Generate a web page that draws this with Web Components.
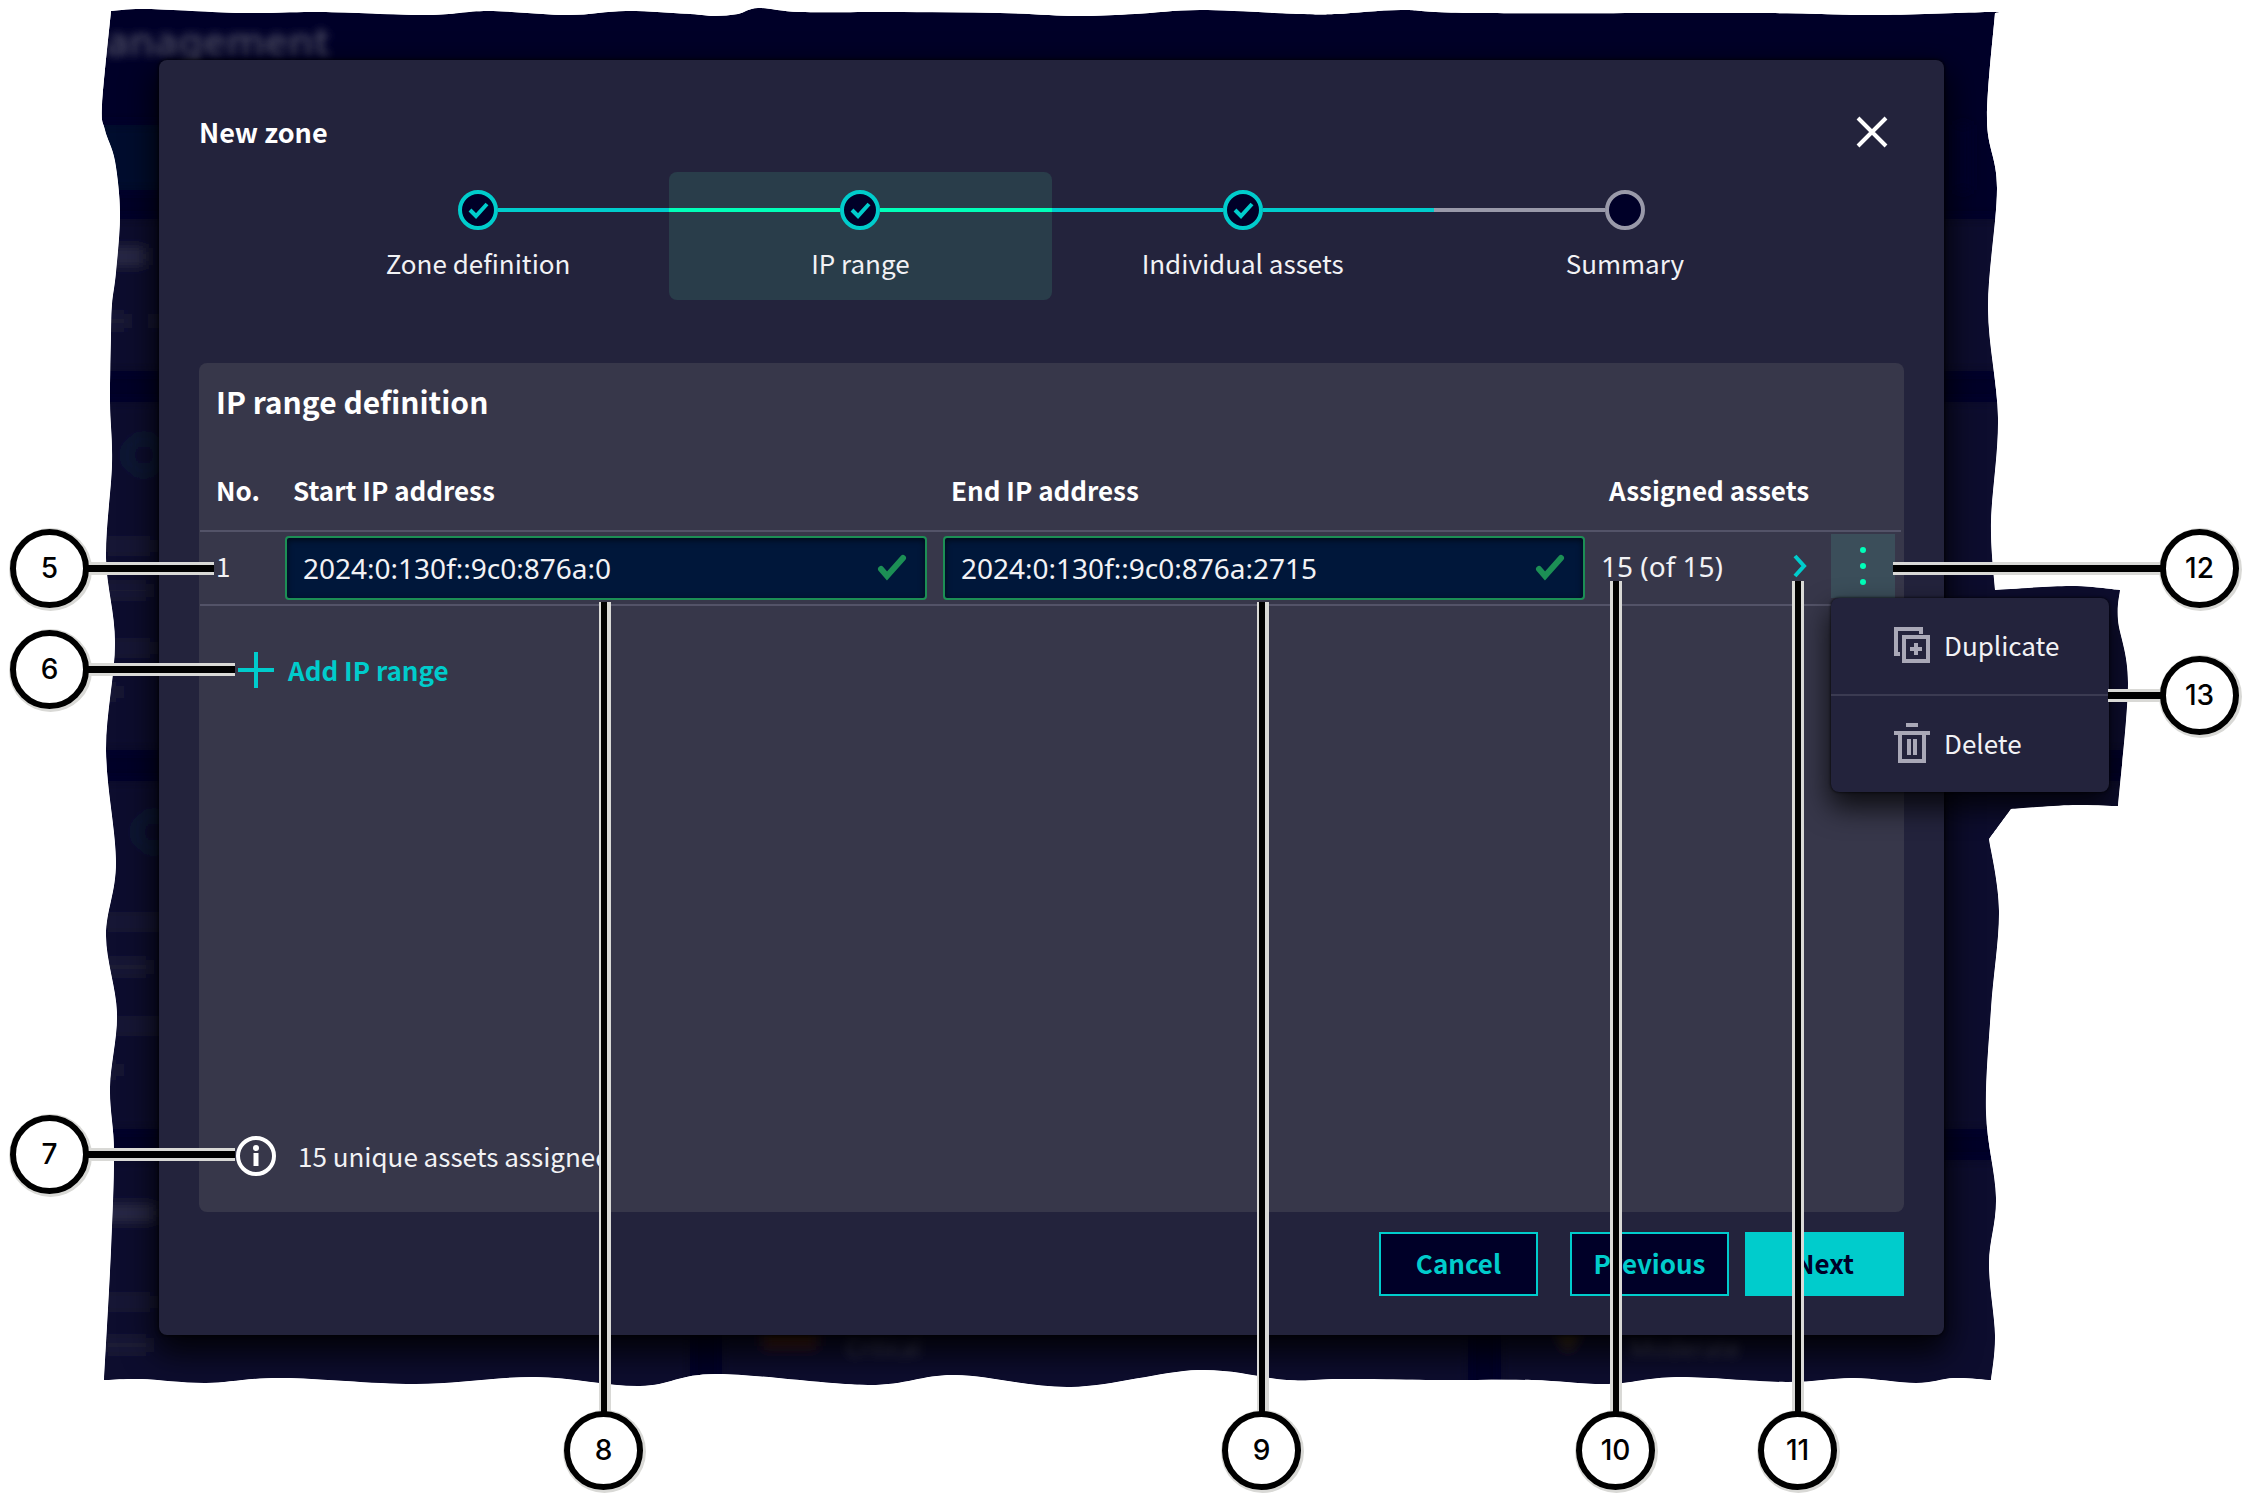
<!DOCTYPE html>
<html lang="en">
<head>
<meta charset="utf-8">
<title>New zone – IP range</title>
<style>
  html { background: #fff; }
  body {
    margin: 0;
    font: 26px/40px "Noto Sans CJK SC", "Noto Sans", sans-serif;
    color: #f2f2f5;
    --cyan: #00cccc;
    --mint: #00ffb9;
    --navy: #000028;
    --dialog: #23233c;
    --panel: #37374a;
    --line: #535368;
    --muted: #9999a9;
    --ok: #1c8f55;
    --digits: "Noto Sans", sans-serif;
  }
</style>
</head>
<body>
<zone-figure>
  <zone-dialog heading="New zone">
    <zone-stepper slot="steps">
      <zone-step state="done" edge="first">Zone definition</zone-step>
      <zone-step state="done" current>IP range</zone-step>
      <zone-step state="done">Individual assets</zone-step>
      <zone-step state="open" edge="last">Summary</zone-step>
    </zone-stepper>
    <ip-range-panel></ip-range-panel>
    <zone-button slot="actions" apart>Cancel</zone-button>
    <zone-button slot="actions">Previous</zone-button>
    <zone-button slot="actions" primary>Next</zone-button>
  </zone-dialog>

  <call-out slot="pins" side="left" style="left:10px;top:529px;--reach:125px">5</call-out>
  <call-out slot="pins" side="left" style="left:10px;top:630px;--reach:146px">6</call-out>
  <call-out slot="pins" side="left" style="left:10px;top:1115px;--reach:146px">7</call-out>
  <call-out slot="pins" side="bottom" style="left:564px;top:1411px;--reach:809px">8</call-out>
  <call-out slot="pins" side="bottom" style="left:1222px;top:1411px;--reach:809px">9</call-out>
  <call-out slot="pins" side="bottom" even style="left:1576px;top:1411px;--reach:830px">10</call-out>
  <call-out slot="pins" side="bottom" even style="left:1758px;top:1411px;--reach:830px">11</call-out>
  <call-out slot="pins" side="right" style="left:2160px;top:529px;--reach:267px">12</call-out>
  <call-out slot="pins" side="right" style="left:2160px;top:656px;--reach:52px">13</call-out>
</zone-figure>

<script>
function define(name, html, setup) {
  const tpl = document.createElement('template');
  tpl.innerHTML = html;
  customElements.define(name, class extends HTMLElement {
    constructor() {
      super();
      this.attachShadow({ mode: 'open' }).append(tpl.content.cloneNode(true));
    }
    connectedCallback() { if (setup) setup(this, this.shadowRoot); }
  });
}

/* Smooth closed outline: each side is a run of points, corners between sides stay sharp. */
function smooth(sides) {
  let d = 'M' + sides[0][0];
  for (const p of sides) {
    for (let i = 0; i < p.length - 1; i++) {
      const a = p[i - 1] || p[i], b = p[i], c = p[i + 1], e = p[i + 2] || c;
      d += `C${b[0] + (c[0] - a[0]) / 6} ${b[1] + (c[1] - a[1]) / 6} ${c[0] - (e[0] - b[0]) / 6} ${c[1] - (e[1] - b[1]) / 6} ${c[0]} ${c[1]}`;
    }
  }
  return d + 'Z';
}
const torn = smooth([
  [[111,11],[147,9],[243,13],[320,12],[427,15],[488,11],[568,15],[626,11],[690,14],[714,16],[738,14],[758,8],[800,12],[890,12],[1000,13],[1078,16],[1135,14],[1200,10],[1300,14],[1337,14],[1401,10],[1474,13],[1760,13],[1878,15],[1989,12],[1995,13]],
  [[1995,13],[1987,120],[1997,188],[1988,308],[1998,418],[1991,522],[1995,590]],
  [[1995,590],[2070,586],[2120,590]],
  [[2120,590],[2118,620],[2128,683],[2118,806]],
  [[2118,806],[2073,805],[2011,809]],
  [[2011,809],[1989,839]],
  [[1989,839],[1999,911],[1991,1009],[1986,1112],[1996,1198],[1989,1263],[1995,1335],[1991,1380]],
  [[1991,1380],[1954,1378],[1916,1383],[1853,1378],[1786,1382],[1677,1377],[1608,1384],[1532,1380],[1438,1380],[1340,1379],[1287,1380],[1198,1370],[1071,1387],[955,1375],[868,1385],[716,1374],[640,1386],[535,1377],[416,1384],[282,1378],[206,1383],[141,1379],[104,1380]],
  [[104,1380],[111,1250],[114,1152],[110,1087],[117,1013],[106,936],[116,862],[106,750],[115,643],[106,558],[112,464],[110,402],[111,335],[112,304],[116,272],[120,214],[115,161],[105,130],[102,105],[111,11]]
]);

define('torn-backdrop', `
<style>
  :host { display: block; position: absolute; inset: 0; z-index: 0; }
  svg { display: block; width: 100%; height: 100%; }
</style>
<svg viewBox="0 0 2244 1497" preserveAspectRatio="none" aria-hidden="true">
  <defs>
    <clipPath id="edge"><path/></clipPath>
    <filter id="soft" x="-20%" y="-20%" width="140%" height="140%"><feGaussianBlur stdDeviation="6"/></filter>
    <filter id="text" x="-20%" y="-50%" width="140%" height="200%"><feGaussianBlur stdDeviation="4"/></filter>
  </defs>
  <g clip-path="url(#edge)">
    <rect width="2244" height="1497" fill="#000028"/>
    <g filter="url(#soft)">
      <rect x="60" y="125" width="110" height="65" fill="#000a2d"/>
      <rect x="1957" y="125" width="12" height="65" fill="#06062e"/>
      <rect x="40" y="219" width="2160" height="152" fill="#0c0c2d"/>
      <rect x="40" y="402" width="2160" height="348" fill="#0c0c2d"/>
      <rect x="40" y="781" width="2160" height="348" fill="#0c0c2d"/>
      <rect x="40" y="1160" width="650" height="300" fill="#0c0c2d"/>
      <rect x="722" y="1160" width="746" height="300" fill="#0c0c2d"/>
      <rect x="1501" y="1160" width="700" height="300" fill="#0c0c2d"/>
      <circle cx="144" cy="455" r="17" fill="none" stroke="#0a1b38" stroke-width="8"/>
      <circle cx="154" cy="832" r="17" fill="none" stroke="#0a1b38" stroke-width="8"/>
      <g fill="#1b1a38">
        <rect x="104" y="540" width="50" height="12"/><rect x="104" y="584" width="46" height="13"/>
        <rect x="104" y="642" width="50" height="12"/><rect x="104" y="686" width="16" height="12"/>
        <rect x="104" y="314" width="24" height="14"/><rect x="152" y="314" width="12" height="14"/>
        <rect x="104" y="916" width="60" height="12"/><rect x="104" y="960" width="46" height="14"/>
        <rect x="104" y="1020" width="60" height="12"/><rect x="104" y="1064" width="16" height="12"/>
        <rect x="104" y="1296" width="50" height="12"/><rect x="104" y="1338" width="46" height="14"/>
      </g>
      <rect x="104" y="248" width="42" height="17" fill="#2a2947"/>
      <rect x="104" y="1205" width="52" height="16" fill="#2a2947"/>
      <rect x="764" y="1326" width="52" height="20" fill="#4a2408"/>
      <path d="M1556 1328h24l-12 22z" fill="#4f3b0a"/>
    </g>
    <g filter="url(#text)" fill="#4c4c62" font-family="Noto Sans, sans-serif">
      <text x="330" y="56" text-anchor="end" font-size="40" font-weight="600">anagement</text>
      <text x="846" y="1356" font-size="23">Critical</text>
      <text x="1630" y="1356" font-size="24">Moderate</text>
    </g>
  </g>
</svg>`, (el, root) => root.querySelector('#edge path').setAttribute('d', torn));

/* White paper outside the torn outline, so shadows end at the tear. */
define('torn-paper', `
<style>
  :host { display: block; position: absolute; inset: 0; z-index: 2; pointer-events: none; }
  svg { display: block; width: 100%; height: 100%; }
</style>
<svg viewBox="0 0 2244 1497" preserveAspectRatio="none" aria-hidden="true"><path fill="#fff" fill-rule="evenodd"/></svg>`,
(el, root) => root.querySelector('path').setAttribute('d', 'M0 0H2244V1497H0Z' + torn));

define('zone-figure', `
<style>
  :host { display: block; position: relative; padding: 60px 300px 162px 159px; }
  main { display: block; position: relative; z-index: 1; }
</style>
<torn-backdrop></torn-backdrop>
<main><slot></slot></main>
<torn-paper></torn-paper>
<slot name="pins"></slot>`);

define('call-out', `
<style>
  :host {
    display: block; position: absolute; z-index: 3; width: 79px; height: 79px;
    font: 500 28px/67px Inter, "Liberation Sans", sans-serif; color: #000; text-align: center;
  }
  .disc {
    box-sizing: border-box; width: 79px; height: 79px;
    border: 6px solid #000; border-radius: 50%; background: #fff;
    box-shadow: 1px 1px 0 2px #d9d9d6;
  }
  i { position: absolute; background: #000; }
  :host([side="left"]) i { left: 76px; top: 36px; height: 7px; width: calc(var(--reach) + 3px); }
  :host([side="right"]) i { right: 76px; top: 36px; height: 7px; width: calc(var(--reach) + 3px); }
  :host([side="bottom"]) i { left: 37px; bottom: 76px; width: 6px; height: calc(var(--reach) + 3px); }
  i.halo { background: none; box-shadow: 0 -3px #d9d9d6, 0 3px #d9d9d6; }
  :host([side="bottom"]) i.halo { box-shadow: -2px 0 #d9d9d6, 4px 0 #d9d9d6; }
  :host([side="bottom"][even]) i.halo { box-shadow: -3px 0 #d9d9d6, 3px 0 #d9d9d6; }
  .disc { position: relative; }
</style>
<i class="halo"></i><div class="disc"><slot></slot></div><i></i>`);

define('zone-dialog', `
<style>
  :host { display: block; }
  section {
    box-sizing: border-box; padding: 52px 40px 39px; border-radius: 8px; background: var(--dialog);
    box-shadow: 0 0 4px #000, 0 14px 32px 4px rgba(0,0,0,.85);
  }
  header { display: flex; align-items: center; justify-content: space-between; height: 40px; }
  h1 { margin: 0; font: inherit; font-size: 27px; font-weight: 700; color: #fff; }
  button { display: block; width: 64px; height: 40px; padding: 0; border: 0; background: none; color: #fff; cursor: pointer; }
  svg { display: block; margin: auto; }
  .steps { margin: 20px 88px 63px; }
  footer { display: flex; justify-content: flex-end; gap: 16px; margin-top: 20px; }
</style>
<section role="dialog" aria-labelledby="h">
  <header>
    <h1 id="h"></h1>
    <button type="button" aria-label="Close"><svg width="32" height="32" viewBox="0 0 32 32" fill="none" stroke="currentColor" stroke-width="4"><path d="M2 2l28 28M30 2L2 30"/></svg></button>
  </header>
  <div class="steps"><slot name="steps"></slot></div>
  <slot></slot>
  <footer><slot name="actions"></slot></footer>
</section>`, (el, root) => { root.querySelector('h1').textContent = el.getAttribute('heading'); });

define('zone-stepper', `
<style>
  :host { display: block; }
  nav { display: flex; }
  ::slotted(*) { flex: 1 1 0; }
</style>
<nav aria-label="Steps"><slot></slot></nav>`);

define('zone-step', `
<style>
  :host { display: block; --track: var(--cyan); }
  button {
    display: flex; flex-direction: column; align-items: center; gap: 13px; width: 100%;
    padding: 18px 0 17px; border: 0; border-radius: 8px; background: none; font: inherit; color: inherit; cursor: pointer;
  }
  :host([current]) button { background: #293d4a; }
  :host([current]) { --track: var(--mint); }
  .rail { display: flex; align-items: center; width: 100%; }
  .rail::before, .rail::after { content: ""; flex: 1; height: 4px; background: var(--track); }
  :host([edge="first"]) .rail::before, :host([edge="last"]) .rail::after { background: none; }
  :host([state="open"]) { --track: var(--muted); }
  .dot {
    box-sizing: border-box; width: 40px; height: 40px; border: 4px solid var(--cyan); border-radius: 50%;
    background: var(--navy); color: var(--cyan);
  }
  :host([state="open"]) .dot { border-color: var(--muted); }
  :host([state="open"]) svg { display: none; }
  svg { display: block; }
</style>
<button type="button">
  <span class="rail"><span class="dot"><svg width="32" height="32" viewBox="0 0 32 32" fill="none" stroke="currentColor" stroke-width="4"><path d="M8 16l6 6 11-12"/></svg></span></span>
  <span><slot></slot></span>
</button>`);

define('zone-button', `
<style>
  :host { display: block; }
  :host([apart]) { margin-right: 16px; }
  button {
    display: block; width: 159px; height: 64px; padding: 0 0 2px; border: 2px solid var(--cyan);
    background: var(--navy); color: var(--cyan); font: inherit; font-weight: 700; cursor: pointer;
  }
  :host([primary]) button { background: var(--cyan); color: var(--navy); }
</style>
<button type="button"><slot></slot></button>`);

define('ip-field', `
<style>
  :host { display: block; position: relative; margin-right: 16px; }
  input {
    display: block; box-sizing: border-box; width: 100%; height: 64px; padding: 0 64px 0 16px;
    border: 2px solid var(--ok); border-radius: 4px; background: #00173a; color: #f2f2f5;
    box-shadow: inset 0 2px 6px rgba(0,0,0,.6); font: 28px var(--digits); outline: 0;
  }
  svg { position: absolute; right: 20px; top: 18px; color: var(--ok); }
</style>
<input type="text">
<svg width="30" height="28" viewBox="0 0 30 28" fill="none" stroke="currentColor" stroke-width="6" stroke-linecap="round" aria-hidden="true"><path d="M4 15l6 7L26 4" stroke-linejoin="miter"/></svg>`,
(el, root) => {
  const input = root.querySelector('input');
  input.value = el.getAttribute('value');
  input.setAttribute('aria-label', el.getAttribute('label'));
});

define('row-menu', `
<style>
  :host { display: block; position: relative; height: 64px; }
  button { font: inherit; color: inherit; border: 0; background: none; cursor: pointer; }
  .trigger { display: block; width: 64px; height: 64px; padding: 0; background: #3b4e5a; color: var(--mint); }
  .menu {
    position: absolute; left: 0; top: 64px; width: 278px; border-radius: 8px; background: var(--dialog);
    box-shadow: 0 0 3px #000, 0 14px 28px 2px rgba(0,0,0,.75); z-index: 2;
  }
  .menu button { display: flex; align-items: center; gap: 12px; width: 100%; height: 96px; padding: 0 0 2px 61px; text-align: left; }
  .menu button + button { height: 98px; border-top: 2px solid #3b3b52; }
  .menu svg { color: #a9a8b7; }
  svg { display: block; flex: none; }
</style>
<button class="trigger" type="button" aria-label="More actions" aria-expanded="true"><svg width="64" height="64" viewBox="0 0 64 64" fill="currentColor"><circle cx="32" cy="16" r="3"/><circle cx="32" cy="32" r="3"/><circle cx="32" cy="48" r="3"/></svg></button>
<div class="menu" role="menu">
  <button type="button" role="menuitem"><svg width="40" height="40" viewBox="0 0 40 40" fill="none" stroke="currentColor" stroke-width="4"><path d="M8 29H4V4h25v5"/><path d="M12 12h24v24H12zM24 18v12M18 24h12"/></svg>Duplicate</button>
  <button type="button" role="menuitem"><svg width="40" height="40" viewBox="0 0 40 40" fill="none" stroke="currentColor" stroke-width="4"><path d="M14 2h12M2 10h36M8 10v28h24V10M17 16v16M23 16v16"/></svg>Delete</button>
</div>`);

define('ip-range-panel', `
<style>
  :host { display: block; }
  section {
    display: flex; flex-direction: column; box-sizing: border-box; min-height: 849px;
    padding: 18px 3px 36px 1px; border-radius: 8px; background: var(--panel);
  }
  h2 { margin: 0 16px; font: inherit; font-size: 30px; font-weight: 700; line-height: 40px; color: #fff; }
  table { width: 100%; table-layout: fixed; border-collapse: separate; border-spacing: 0; }
  th { padding: 49px 0 20px 8px; text-align: left; color: #fff; white-space: nowrap; font-weight: 700; }
  th:first-child { padding-left: 16px; }
  td { box-sizing: border-box; height: 76px; padding: 0; border-top: 2px solid var(--line); border-bottom: 2px solid var(--line); }
  thead td { border: 0; }
  td.no { padding: 0 0 4px 16px; }
  td.assets, td.more { padding-bottom: 4px; }
  .count { display: flex; align-items: center; justify-content: space-between; padding-right: 11px; font: 28px/40px var(--digits); }
  button { font: inherit; border: 0; background: none; padding: 0; cursor: pointer; }
  .go { width: 40px; height: 40px; color: var(--cyan); }
  svg { display: block; flex: none; }
  .add { display: flex; align-items: center; align-self: flex-start; gap: 12px; margin: 44px 0 0 36px; color: var(--cyan); font-weight: 700; }
  .info { display: flex; align-items: center; gap: 22px; margin: auto 0 0 36px; }
  .info svg { color: #fff; }
</style>
<section>
  <h2>IP range definition</h2>
  <table>
    <colgroup><col style="width:85px"><col><col><col style="width:230px"><col style="width:70px"></colgroup>
    <thead><tr><th scope="col">No.</th><th scope="col">Start IP address</th><th scope="col">End IP address</th><th scope="col">Assigned assets</th><td></td></tr></thead>
    <tbody><tr>
      <td class="no">1</td>
      <td><ip-field label="Start IP address" value="2024:0:130f::9c0:876a:0"></ip-field></td>
      <td><ip-field label="End IP address" value="2024:0:130f::9c0:876a:2715"></ip-field></td>
      <td class="assets"><div class="count"><span>15 (of 15)</span><button class="go" type="button" aria-label="Show assigned assets"><svg width="40" height="40" viewBox="0 0 40 40" fill="none" stroke="currentColor" stroke-width="4"><path d="M15 10l9 10-9 10"/></svg></button></div></td>
      <td class="more"><row-menu></row-menu></td>
    </tr></tbody>
  </table>
  <button class="add" type="button"><svg width="40" height="40" viewBox="0 0 40 40" fill="none" stroke="currentColor" stroke-width="4"><path d="M20 2v36M2 20h36"/></svg>Add IP range</button>
  <div class="info"><svg width="40" height="40" viewBox="0 0 40 40" aria-hidden="true"><circle cx="20" cy="20" r="18" fill="none" stroke="currentColor" stroke-width="4"/><circle cx="20" cy="12" r="3" fill="currentColor"/><path d="M20 17v13" stroke="currentColor" stroke-width="5"/></svg><span>15 unique assets assigned</span></div>
</section>`);
</script>
</body>
</html>
